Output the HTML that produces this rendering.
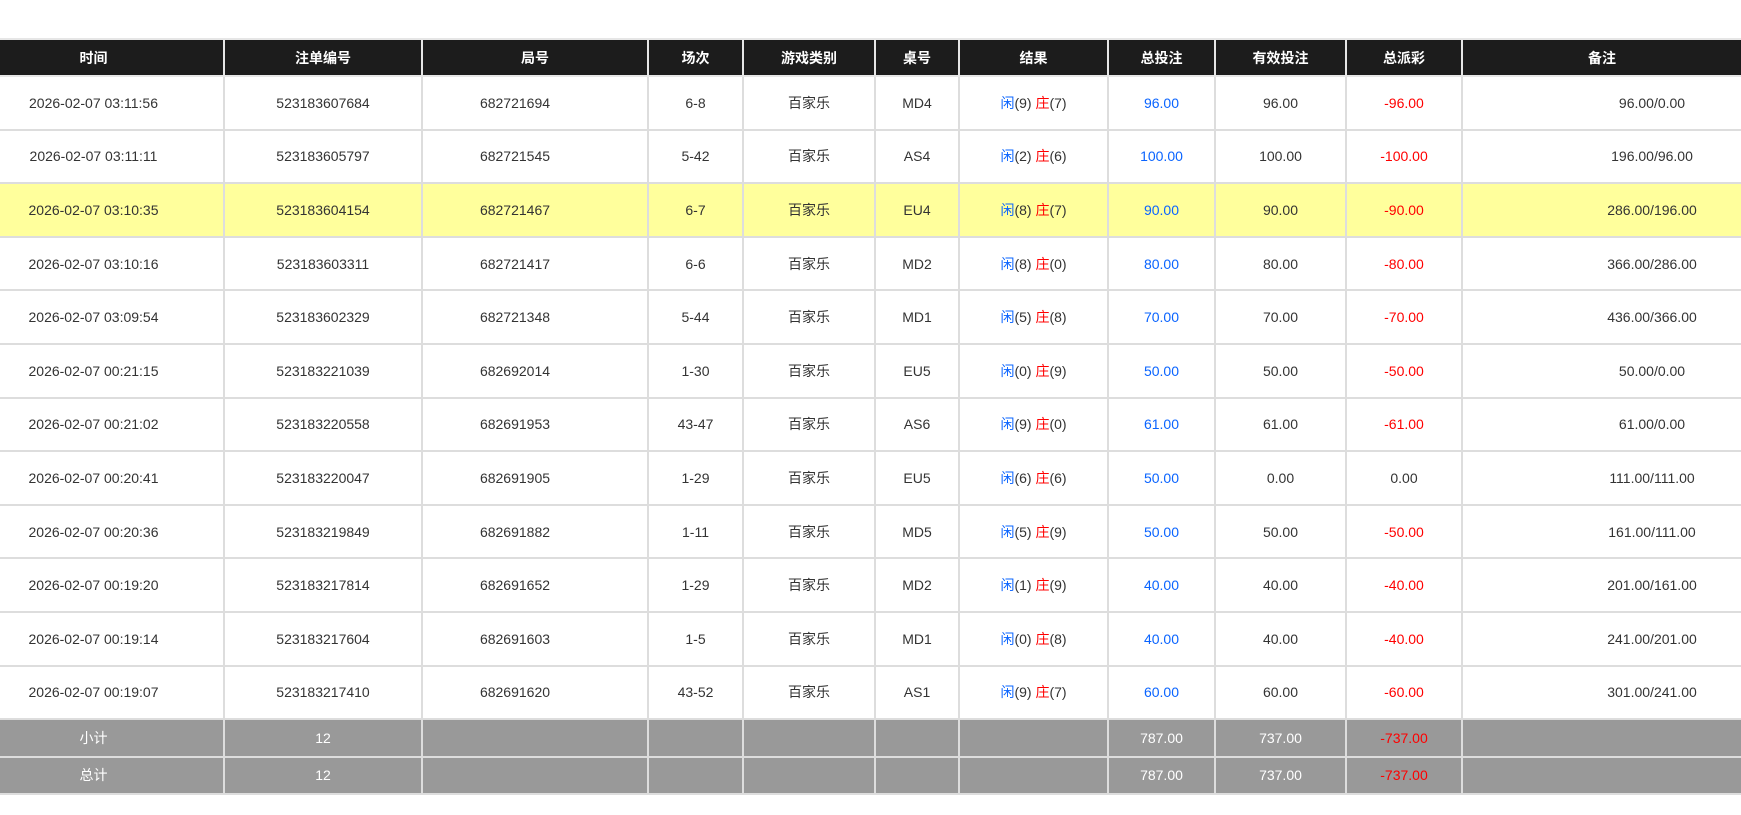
<!DOCTYPE html>
<html><head><meta charset="utf-8"><style>
body{margin:0;background:#fff;font-family:"Liberation Sans","Noto Sans CJK SC",sans-serif;}
table{position:absolute;top:38px;left:0;width:1741px;border-collapse:collapse;table-layout:fixed;font-size:14px;color:#333;}
td,th{border:2px solid #ddd;text-align:center;padding:0;}
th{background:#1c1c1c;color:#fff;height:35px;font-weight:bold;font-size:14px;border-color:#e6e6e6;}
tr.d td{height:51.6px;}
tr.h td{background:#ffff9c;}
tr.f td{background:#999;color:#fff;height:35.5px;}
td:first-child,th:first-child{border-left:none}
td:last-child,th:last-child{border-right:none}
.b{color:#0a64ff}.r,tr.f td.r{color:#ff0000}
td.m{padding-left:100px}
td:first-child,th:first-child{padding-right:36px}
tr.d td:nth-child(3){padding-right:40px}
</style></head><body>
<table>
<colgroup><col style="width:224px"><col style="width:198px"><col style="width:226px"><col style="width:95px"><col style="width:132px"><col style="width:84px"><col style="width:149px"><col style="width:107px"><col style="width:131px"><col style="width:116px"><col style="width:279px"></colgroup>
<tr><th>时间</th><th>注单编号</th><th>局号</th><th>场次</th><th>游戏类别</th><th>桌号</th><th>结果</th><th>总投注</th><th>有效投注</th><th>总派彩</th><th>备注</th></tr>
<tr class="d"><td>2026-02-07 03:11:56</td><td>523183607684</td><td>682721694</td><td>6-8</td><td>百家乐</td><td>MD4</td><td><span class="b">闲</span>(9) <span class="r">庄</span>(7)</td><td class="b">96.00</td><td>96.00</td><td class="r">-96.00</td><td class="m">96.00/0.00</td></tr>
<tr class="d"><td>2026-02-07 03:11:11</td><td>523183605797</td><td>682721545</td><td>5-42</td><td>百家乐</td><td>AS4</td><td><span class="b">闲</span>(2) <span class="r">庄</span>(6)</td><td class="b">100.00</td><td>100.00</td><td class="r">-100.00</td><td class="m">196.00/96.00</td></tr>
<tr class="d h"><td>2026-02-07 03:10:35</td><td>523183604154</td><td>682721467</td><td>6-7</td><td>百家乐</td><td>EU4</td><td><span class="b">闲</span>(8) <span class="r">庄</span>(7)</td><td class="b">90.00</td><td>90.00</td><td class="r">-90.00</td><td class="m">286.00/196.00</td></tr>
<tr class="d"><td>2026-02-07 03:10:16</td><td>523183603311</td><td>682721417</td><td>6-6</td><td>百家乐</td><td>MD2</td><td><span class="b">闲</span>(8) <span class="r">庄</span>(0)</td><td class="b">80.00</td><td>80.00</td><td class="r">-80.00</td><td class="m">366.00/286.00</td></tr>
<tr class="d"><td>2026-02-07 03:09:54</td><td>523183602329</td><td>682721348</td><td>5-44</td><td>百家乐</td><td>MD1</td><td><span class="b">闲</span>(5) <span class="r">庄</span>(8)</td><td class="b">70.00</td><td>70.00</td><td class="r">-70.00</td><td class="m">436.00/366.00</td></tr>
<tr class="d"><td>2026-02-07 00:21:15</td><td>523183221039</td><td>682692014</td><td>1-30</td><td>百家乐</td><td>EU5</td><td><span class="b">闲</span>(0) <span class="r">庄</span>(9)</td><td class="b">50.00</td><td>50.00</td><td class="r">-50.00</td><td class="m">50.00/0.00</td></tr>
<tr class="d"><td>2026-02-07 00:21:02</td><td>523183220558</td><td>682691953</td><td>43-47</td><td>百家乐</td><td>AS6</td><td><span class="b">闲</span>(9) <span class="r">庄</span>(0)</td><td class="b">61.00</td><td>61.00</td><td class="r">-61.00</td><td class="m">61.00/0.00</td></tr>
<tr class="d"><td>2026-02-07 00:20:41</td><td>523183220047</td><td>682691905</td><td>1-29</td><td>百家乐</td><td>EU5</td><td><span class="b">闲</span>(6) <span class="r">庄</span>(6)</td><td class="b">50.00</td><td>0.00</td><td>0.00</td><td class="m">111.00/111.00</td></tr>
<tr class="d"><td>2026-02-07 00:20:36</td><td>523183219849</td><td>682691882</td><td>1-11</td><td>百家乐</td><td>MD5</td><td><span class="b">闲</span>(5) <span class="r">庄</span>(9)</td><td class="b">50.00</td><td>50.00</td><td class="r">-50.00</td><td class="m">161.00/111.00</td></tr>
<tr class="d"><td>2026-02-07 00:19:20</td><td>523183217814</td><td>682691652</td><td>1-29</td><td>百家乐</td><td>MD2</td><td><span class="b">闲</span>(1) <span class="r">庄</span>(9)</td><td class="b">40.00</td><td>40.00</td><td class="r">-40.00</td><td class="m">201.00/161.00</td></tr>
<tr class="d"><td>2026-02-07 00:19:14</td><td>523183217604</td><td>682691603</td><td>1-5</td><td>百家乐</td><td>MD1</td><td><span class="b">闲</span>(0) <span class="r">庄</span>(8)</td><td class="b">40.00</td><td>40.00</td><td class="r">-40.00</td><td class="m">241.00/201.00</td></tr>
<tr class="d"><td>2026-02-07 00:19:07</td><td>523183217410</td><td>682691620</td><td>43-52</td><td>百家乐</td><td>AS1</td><td><span class="b">闲</span>(9) <span class="r">庄</span>(7)</td><td class="b">60.00</td><td>60.00</td><td class="r">-60.00</td><td class="m">301.00/241.00</td></tr>
<tr class="f"><td>小计</td><td>12</td><td></td><td></td><td></td><td></td><td></td><td>787.00</td><td>737.00</td><td class="r">-737.00</td><td></td></tr>
<tr class="f"><td>总计</td><td>12</td><td></td><td></td><td></td><td></td><td></td><td>787.00</td><td>737.00</td><td class="r">-737.00</td><td></td></tr>
</table>
</body></html>
